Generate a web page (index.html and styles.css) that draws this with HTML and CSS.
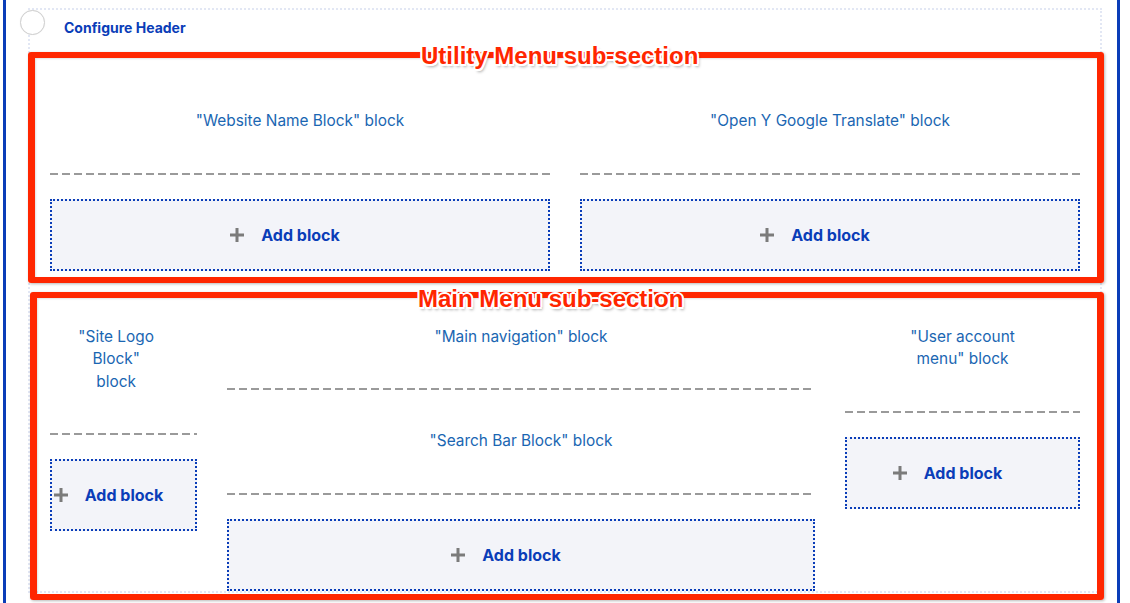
FILE: index.html
```html
<!DOCTYPE html>
<html lang="en">
<head>
<meta charset="utf-8">
<title>Configure Header</title>
<link rel="stylesheet" href="styles.css">
</head>
<body>
<div class="page">
  <div class="section-outline">
    <div class="heading">Configure Header</div>

    <div class="section section-two">
      <div class="region">
        <div class="block"><div class="block-label">"Website Name Block" block</div></div>
        <div class="add-block"><span class="add-link"><svg class="plus" viewBox="0 0 14 14" width="14" height="14"><rect x="5.5" y="0" width="3" height="14" fill="#7b7b7b"/><rect x="0" y="5.5" width="14" height="3" fill="#7b7b7b"/></svg><span class="add-text">Add block</span></span></div>
      </div>
      <div class="region">
        <div class="block"><div class="block-label">"Open Y Google Translate" block</div></div>
        <div class="add-block"><span class="add-link"><svg class="plus" viewBox="0 0 14 14" width="14" height="14"><rect x="5.5" y="0" width="3" height="14" fill="#7b7b7b"/><rect x="0" y="5.5" width="14" height="3" fill="#7b7b7b"/></svg><span class="add-text">Add block</span></span></div>
      </div>
    </div>

    <div class="section section-three">
      <div class="region region-narrow">
        <div class="block"><div class="block-label">"Site Logo Block" block</div></div>
        <div class="add-block"><span class="add-link"><svg class="plus" viewBox="0 0 14 14" width="14" height="14"><rect x="5.5" y="0" width="3" height="14" fill="#7b7b7b"/><rect x="0" y="5.5" width="14" height="3" fill="#7b7b7b"/></svg><span class="add-text">Add block</span></span></div>
      </div>
      <div class="region">
        <div class="block"><div class="block-label">"Main navigation" block</div></div>
        <div class="block"><div class="block-label">"Search Bar Block" block</div></div>
        <div class="add-block"><span class="add-link"><svg class="plus" viewBox="0 0 14 14" width="14" height="14"><rect x="5.5" y="0" width="3" height="14" fill="#7b7b7b"/><rect x="0" y="5.5" width="14" height="3" fill="#7b7b7b"/></svg><span class="add-text">Add block</span></span></div>
      </div>
      <div class="region">
        <div class="block"><div class="block-label">"User account menu" block</div></div>
        <div class="add-block"><span class="add-link"><svg class="plus" viewBox="0 0 14 14" width="14" height="14"><rect x="5.5" y="0" width="3" height="14" fill="#7b7b7b"/><rect x="0" y="5.5" width="14" height="3" fill="#7b7b7b"/></svg><span class="add-text">Add block</span></span></div>
      </div>
    </div>
  </div>
</div>

<span class="remove-section"></span>

<div class="annot-box annot-utility"></div>
<div class="annot-box annot-main"></div>
<div class="annot-label label-utility">Utility Menu sub-section</div>
<div class="annot-label label-main">Main Menu sub-section</div>
</body>
</html>
```

FILE: styles.css
```css
html, body {
  margin: 0;
  padding: 0;
  background: #ffffff;
}

body {
  position: relative;
  height: 603px;
  overflow: hidden;
  font-family: "Inter", "Liberation Sans", sans-serif;
}

.page {
  margin-left: 3px;
  width: 1117px;
  height: 603px;
  border-left: 3px solid #0a3db8;
  border-right: 3px solid #0a3db8;
  padding-top: 8px;
  box-sizing: border-box;
}

.section-outline {
  margin-left: 22px;
  width: 1074px;
  box-sizing: border-box;
  border: 2px dotted #e2e7f4;
}

.heading {
  padding: 8px 0 0 34px;
  line-height: 20px;
  font-size: 14px;
  font-weight: 700;
  color: #0a3db8;
}

.section {
  display: grid;
  column-gap: 30px;
  padding: 0 20px;
}

.section-two {
  margin-top: 32px;
  grid-template-columns: 1fr 1fr;
}

.section-three {
  margin-top: 15px;
  grid-template-columns: 147fr 588fr 235fr;
  align-items: start;
}

.region {
  display: flex;
  flex-direction: column;
}

.block {
  padding: 40px 0 42px;
  background: repeating-linear-gradient(90deg, #9a9a9a 0 8px, transparent 8px 12px) left bottom / 100% 2px no-repeat;
}

.block-label {
  padding: 0 20%;
  text-align: center;
  font-size: 15.4px;
  line-height: 22.5px;
  color: #1a66b2;
}

.region-narrow .block-label {
  padding: 0 25% 0 15%;
}

.add-block {
  margin-top: 24px;
  height: 72px;
  box-sizing: border-box;
  border: 2px dotted #0a3db8;
  background: #f3f4f9;
  display: flex;
  align-items: center;
  justify-content: center;
}

.add-link {
  display: inline-flex;
  align-items: center;
  gap: 17px;
  padding-right: 30px;
  white-space: nowrap;
}

.plus {
  display: block;
  flex: none;
}

.add-text {
  font-size: 16px;
  font-weight: 700;
  color: #0a3db8;
  line-height: 20px;
}

.remove-section {
  position: absolute;
  left: 20px;
  top: 10px;
  width: 25px;
  height: 25px;
  box-sizing: border-box;
  border: 1px solid #cfcfcf;
  border-radius: 50%;
  background: #ffffff;
  box-shadow: 0 0 1px rgba(0, 0, 0, 0.1);
}

.annot-box {
  position: absolute;
  box-sizing: border-box;
  border: 7px solid #ff2600;
  border-top-width: 6px;
  border-bottom-width: 6px;
  border-radius: 3px;
  box-shadow: 1px 1px 3px rgba(0, 0, 0, 0.28), inset 1px 1px 2px rgba(0, 0, 0, 0.12);
}

.annot-utility {
  left: 28px;
  top: 52px;
  width: 1076px;
  height: 231px;
}

.annot-main {
  left: 30px;
  top: 292px;
  width: 1074px;
  height: 308px;
}

.annot-label {
  position: absolute;
  font-family: "Liberation Sans", Arial, sans-serif;
  font-weight: 700;
  font-size: 24px;
  line-height: 24px;
  color: #ff2600;
  white-space: nowrap;
  text-shadow:
    -1.5px -1.5px 0 #fff, 1.5px -1.5px 0 #fff,
    -1.5px 1.5px 0 #fff, 1.5px 1.5px 0 #fff,
    0 -2px 0 #fff, 0 2px 0 #fff,
    -2px 0 0 #fff, 2px 0 0 #fff,
    2px 3px 3px rgba(0, 0, 0, 0.35);
}

.label-utility {
  left: 421px;
  top: 44px;
}

.label-main {
  left: 418px;
  top: 287px;
}
```
